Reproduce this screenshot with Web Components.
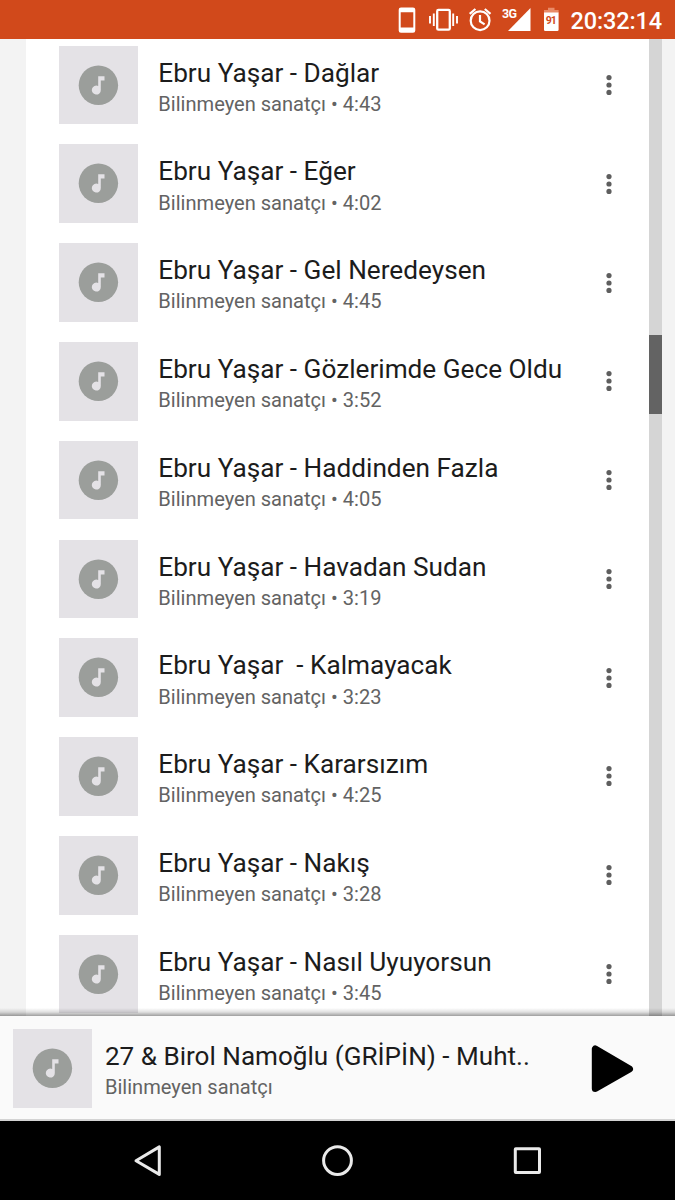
<!DOCTYPE html>
<html lang="tr">
<head>
<meta charset="utf-8">
<title>Müzik</title>
<style>
html,body{margin:0;height:100%;overflow:hidden}
body{font-family:Roboto,"Noto Sans",sans-serif;background:#f3f3f3}
</style>
</head>
<body>
<music-app></music-app>
<script>
function define(name, html) {
  const t = document.createElement('template');
  t.innerHTML = html;
  customElements.define(name, class extends HTMLElement {
    constructor() {
      super();
      this.attachShadow({mode: 'open'}).appendChild(t.content.cloneNode(true));
    }
  });
}

define('status-bar', `
<style>
:host{display:flex;height:39px;background:#d1491b;color:#fff}
svg{display:block;flex:none}
text{font-family:Roboto,sans-serif}
</style>
<svg width="675" height="39" viewBox="0 0 675 39">
  <path fill="#fff" fill-rule="evenodd" d="M401 7.500h12q2.300 0 2.300 2.300v20.700q0 2.300-2.300 2.300h-12q-2.300 0-2.300-2.300v-20.700q0-2.300 2.300-2.300zM400.700 12.200v15.300h12.600v-15.300z"/>
  <rect x="437.200" y="9.900" width="12.600" height="19.800" rx="1.300" fill="none" stroke="#fff" stroke-width="2.300"/>
  <path d="M433.800 13.500v12.500M430 16v7.500M453.200 13.500v12.500M457 16v7.500" stroke="#fff" stroke-width="1.900"/>
  <g fill="none" stroke="#fff" stroke-width="2.200"><circle cx="480.100" cy="20.700" r="9.400"/><path d="M480 15v6.400l4.600 3M469.700 13.800l5.700-4.800M490.500 13.800l-5.700-4.800"/></g>
  <path fill="#fff" d="M508 31h22.500V8z"/>
  <text x="502" y="18.200" font-size="12.500" font-weight="700" fill="#fff" textLength="15" stroke="#d1491b" stroke-width="1" paint-order="stroke">3G</text>
  <path fill="#e98b68" d="M548 7.700h6.500v2.300h4.100v3h-14.600v-3h4z"/>
  <path fill="#fff" d="M544 12.500h14.600v17.200q0 1.300-1.300 1.300h-12q-1.300 0-1.300-1.300z"/>
  <text x="551.300" y="24" font-size="10.500" font-weight="700" text-anchor="middle" fill="#d1491b" textLength="11">91</text>
  <text x="570.500" y="28.800" font-size="23.500" font-weight="500" fill="#fff" textLength="91.500">20:32:14</text>
</svg>`);

define('album-art', `
<style>
:host{display:block;flex:none;width:78.6px;height:78.6px;background:#e4e2e6}
svg{display:block;width:100%;height:100%}
</style>
<svg viewBox="0 0 78.600 78.600">
  <circle cx="39.400" cy="39.300" r="19.700" fill="#9b9e9b"/>
  <path fill="#e4e2e6" d="M39.200 30.300h6.300v4.200h-3.700v9.400a4.500 4.500 0 1 1-2.600-3.900z"/>
</svg>`);

define('track-text', `
<style>
:host{display:block}
.title{font-size:var(--title-size,26.2px);line-height:30px;color:#1c1c1c;white-space:pre}
.sub{font-size:20.08px;line-height:24px;margin-top:4.200px;color:#636363;white-space:pre}
</style>
<div class="title"><slot name="title"></slot></div>
<div class="sub"><slot name="sub"></slot></div>`);

define('more-button', `
<style>:host{display:block;width:24px;height:30px}svg{display:block}</style>
<svg width="24" height="30"><g fill="#5e5e5e"><circle cx="12" cy="7.600" r="2.600"/><circle cx="12" cy="15" r="2.600"/><circle cx="12" cy="22.400" r="2.600"/></g></svg>`);

define('track-row', `
<style>
:host{display:flex;height:78.6px;flex:none}
track-text{margin:12px 0 0 20.400px;flex:1}
more-button{margin:24.300px 27.600px 0 0}
</style>
<album-art></album-art>
<track-text><slot name="title" slot="title"></slot><slot name="sub" slot="sub"></slot></track-text>
<more-button></more-button>`);

define('track-list', `
<style>
:host{display:flex;flex-direction:column;gap:20.2px;box-sizing:border-box;background:#fff;padding:6.7px 0 0 33.300px;overflow:hidden}
</style>
<slot></slot>`);

define('scroll-track', `
<style>
:host{display:block;background:#d5d5d5;box-sizing:border-box;padding-top:296px}
div{height:78.5px;background:#636363}
</style>
<div></div>`);

define('now-playing', `
<style>
:host{display:flex;position:relative;box-sizing:border-box;height:105px;background:#fafafa;border-bottom:2px solid #d3d3d3;padding:13.300px 0 0 13.300px}
:host::before{content:"";position:absolute;left:0;right:0;top:-8px;height:8px;background:linear-gradient(rgba(0,0,0,0),rgba(0,0,0,.12) 50%,rgba(0,0,0,.38))}
track-text{margin:12px 0 0 13px;flex:1;--title-size:26.100px}
svg{display:block;margin:13px 41.300px 0 0}
</style>
<album-art></album-art>
<track-text><span slot="title">27 &amp; Birol Namoğlu (GRİPİN) - Muht..</span><span slot="sub">Bilinmeyen sanatçı</span></track-text>
<svg width="44" height="52" viewBox="590 1042 44 52"><path d="M595.300 1049v39.500L629.500 1069z" stroke="#000" stroke-width="7" stroke-linejoin="round"/></svg>`);

define('nav-bar', `
<style>
:host{display:flex;height:79px;background:#000;align-items:center;box-sizing:border-box}
svg{display:block}
</style>
<svg width="675" height="79" viewBox="0 1121 675 79" fill="none" stroke="#eaeaea" stroke-width="3" stroke-linejoin="round">
  <path d="M136 1160.700l23.300-13.800v27.500z"/>
  <circle cx="337.500" cy="1160.600" r="13.900"/>
  <rect x="515.300" y="1148.700" width="24.200" height="23.900" rx=".5"/>
</svg>`);

const tracks = [
  ['Dağlar','4:43'],['Eğer','4:02'],['Gel Neredeysen','4:45'],['Gözlerimde Gece Oldu','3:52'],
  ['Haddinden Fazla','4:05'],['Havadan Sudan','3:19'],['Kalmayacak','3:23'],['Kararsızım','4:25'],
  ['Nakış','3:28'],['Nasıl Uyuyorsun','3:45']
];
define('music-app', `
<style>
:host{display:flex;flex-direction:column;width:675px;height:1200px;overflow:hidden}
status-bar,now-playing,nav-bar{flex:none}
main{flex:1;min-height:0;display:grid;grid-template-columns:26px 623px 13px 13px;grid-template-rows:100%;background:#f3f3f3;overflow:hidden}
track-list{grid-column:2}
</style>
<status-bar></status-bar>
<main>
  <track-list>${tracks.map(([n, d]) => `<track-row><span slot="title">Ebru Yaşar ${n === 'Kalmayacak' ? ' ' : ''}- ${n}</span><span slot="sub">Bilinmeyen sanatçı • ${d}</span></track-row>`).join('')}</track-list>
  <scroll-track></scroll-track>
</main>
<now-playing></now-playing>
<nav-bar></nav-bar>`);
</script>
</body>
</html>
